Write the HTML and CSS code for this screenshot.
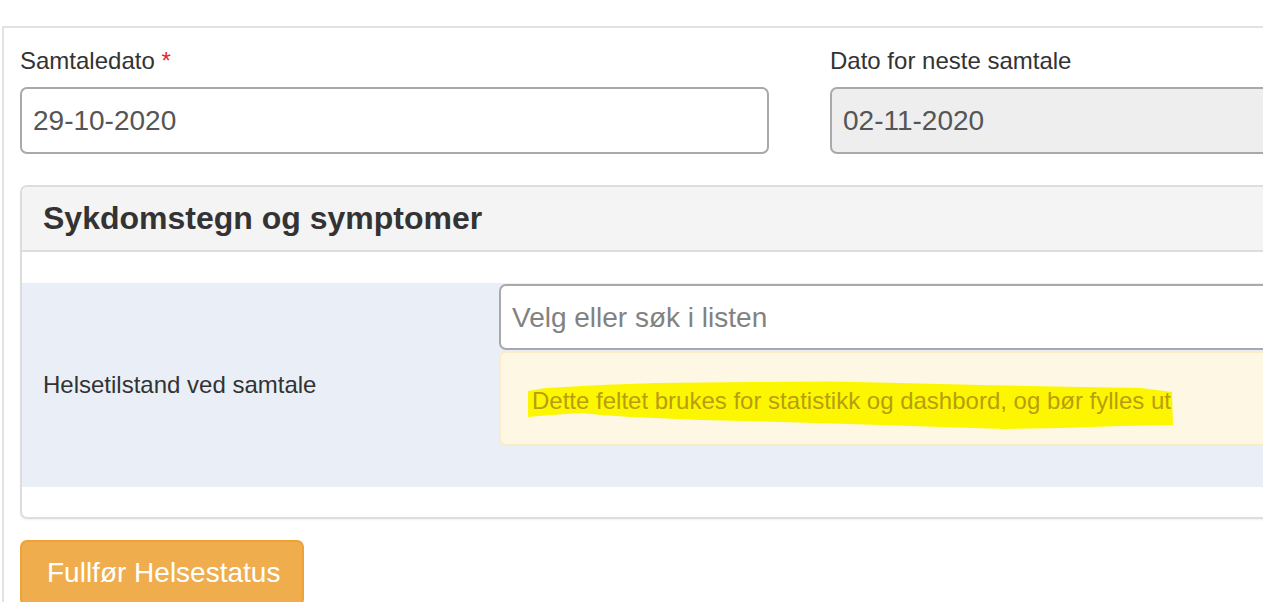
FILE: index.html
```html
<!DOCTYPE html>
<html lang="no">
<head>
<meta charset="utf-8">
<title>Helsestatus</title>
<link rel="stylesheet" href="styles.css">
</head>
<body>
<div class="viewport">
<div class="page">
  <div class="date-row">
    <div class="field">
      <label class="label">Samtaledato <span class="req">*</span></label>
      <div class="input">29-10-2020</div>
    </div>
    <div class="field">
      <label class="label">Dato for neste samtale</label>
      <div class="input input-disabled">02-11-2020</div>
    </div>
  </div>

  <div class="panel">
    <div class="panel-heading">Sykdomstegn og symptomer</div>
    <div class="panel-body">
      <div class="q-row">
        <div class="q-label">Helsetilstand ved samtale</div>
        <div class="q-control">
          <div class="select">Velg eller søk i listen</div>
          <div class="alert">
            <svg class="marker" width="700" height="90" viewBox="0 0 700 90" aria-hidden="true">
              <polygon fill="#fcf700" points="27,38 45,35 100,32 154,30 250,29 330,28.5 400,30 480,32 580,34 640,35 671,39 672,72 620,73 560,75 504,76 440,74 380,72 280,69 200,67 130,64 100,62 80,60 50,62 27,64"/>
            </svg>
            <span class="alert-text">Dette feltet brukes for statistikk og dashbord, og bør fylles ut</span>
          </div>
        </div>
      </div>
    </div>
  </div>

  <button class="btn-warning" type="button">Fullfør Helsestatus</button>
</div>
</div>
</body>
</html>
```

FILE: styles.css
```css
html, body {
  margin: 0;
  padding: 0;
  background: #ffffff;
  overflow: hidden;
}

body {
  font-family: "Liberation Sans", Arial, sans-serif;
  color: #333333;
}

.viewport {
  width: 1263px;
  height: 602px;
  overflow: hidden;
}

.page {
  margin: 26px 0 0 2px;
  width: 1700px;
  border-top: 2px solid #e2e2e2;
  border-left: 2px solid #e2e2e2;
  padding: 16px 0 0 16px;
}

.date-row {
  display: grid;
  grid-template-columns: 749px 749px;
  column-gap: 61px;
}

.field {
  display: flex;
  flex-direction: column;
}

.label {
  font-size: 24px;
  line-height: 34px;
  margin-bottom: 9px;
  color: #333333;
}

.req {
  color: #e8262a;
}

.input {
  box-sizing: border-box;
  height: 67px;
  border: 2px solid #a9a9a9;
  border-radius: 7px;
  padding: 0 11px;
  font-size: 28px;
  line-height: 63px;
  color: #555555;
  background: #ffffff;
}

.input-disabled {
  background: #eeeeee;
}

.panel {
  margin-top: 31px;
  width: 1560px;
  border: 2px solid #dddddd;
  border-radius: 7px;
  box-shadow: 0 1px 2px rgba(0, 0, 0, 0.06);
}

.panel-heading {
  box-sizing: border-box;
  height: 65px;
  background: #f4f4f4;
  border-bottom: 2px solid #dddddd;
  border-radius: 5px 5px 0 0;
  padding: 0 21px;
  font-size: 32px;
  font-weight: bold;
  line-height: 63px;
  color: #333333;
}

.panel-body {
  padding: 31px 0 30px;
}

.q-row {
  display: flex;
  align-items: center;
  background: #eaeff7;
  height: 204px;
}

.q-label {
  width: 477px;
  box-sizing: border-box;
  padding-left: 21px;
  font-size: 24px;
  line-height: 34px;
  color: #333333;
}

.q-control {
  flex: 1;
  align-self: flex-start;
  padding-top: 1px;
  display: flex;
  flex-direction: column;
}

.select {
  box-sizing: border-box;
  height: 66px;
  border: 2px solid #a9a9a9;
  border-radius: 7px;
  background: #ffffff;
  padding: 0 11px;
  font-size: 28px;
  line-height: 64px;
  color: #828282;
}

.alert {
  position: relative;
  box-sizing: border-box;
  margin-top: 1px;
  height: 95px;
  border: 2px solid #faecc8;
  border-radius: 7px;
  background: #fdf7e4;
  padding: 0 31px;
  display: flex;
  align-items: center;
}

.marker {
  position: absolute;
  left: 0;
  top: 0;
}

.alert-text {
  position: relative;
  font-size: 24px;
  line-height: 34px;
  color: #b99d10;
  margin-top: 4px;
}

.btn-warning {
  display: block;
  margin-top: 21px;
  width: 284px;
  height: 66px;
  box-sizing: border-box;
  background: #f0ad4e;
  border: 2px solid #eea236;
  border-radius: 7px;
  padding: 0 0 0 25px;
  text-align: left;
  font-family: "Liberation Sans", Arial, sans-serif;
  font-size: 28px;
  line-height: 62px;
  color: #ffffff;
  cursor: pointer;
}
```
